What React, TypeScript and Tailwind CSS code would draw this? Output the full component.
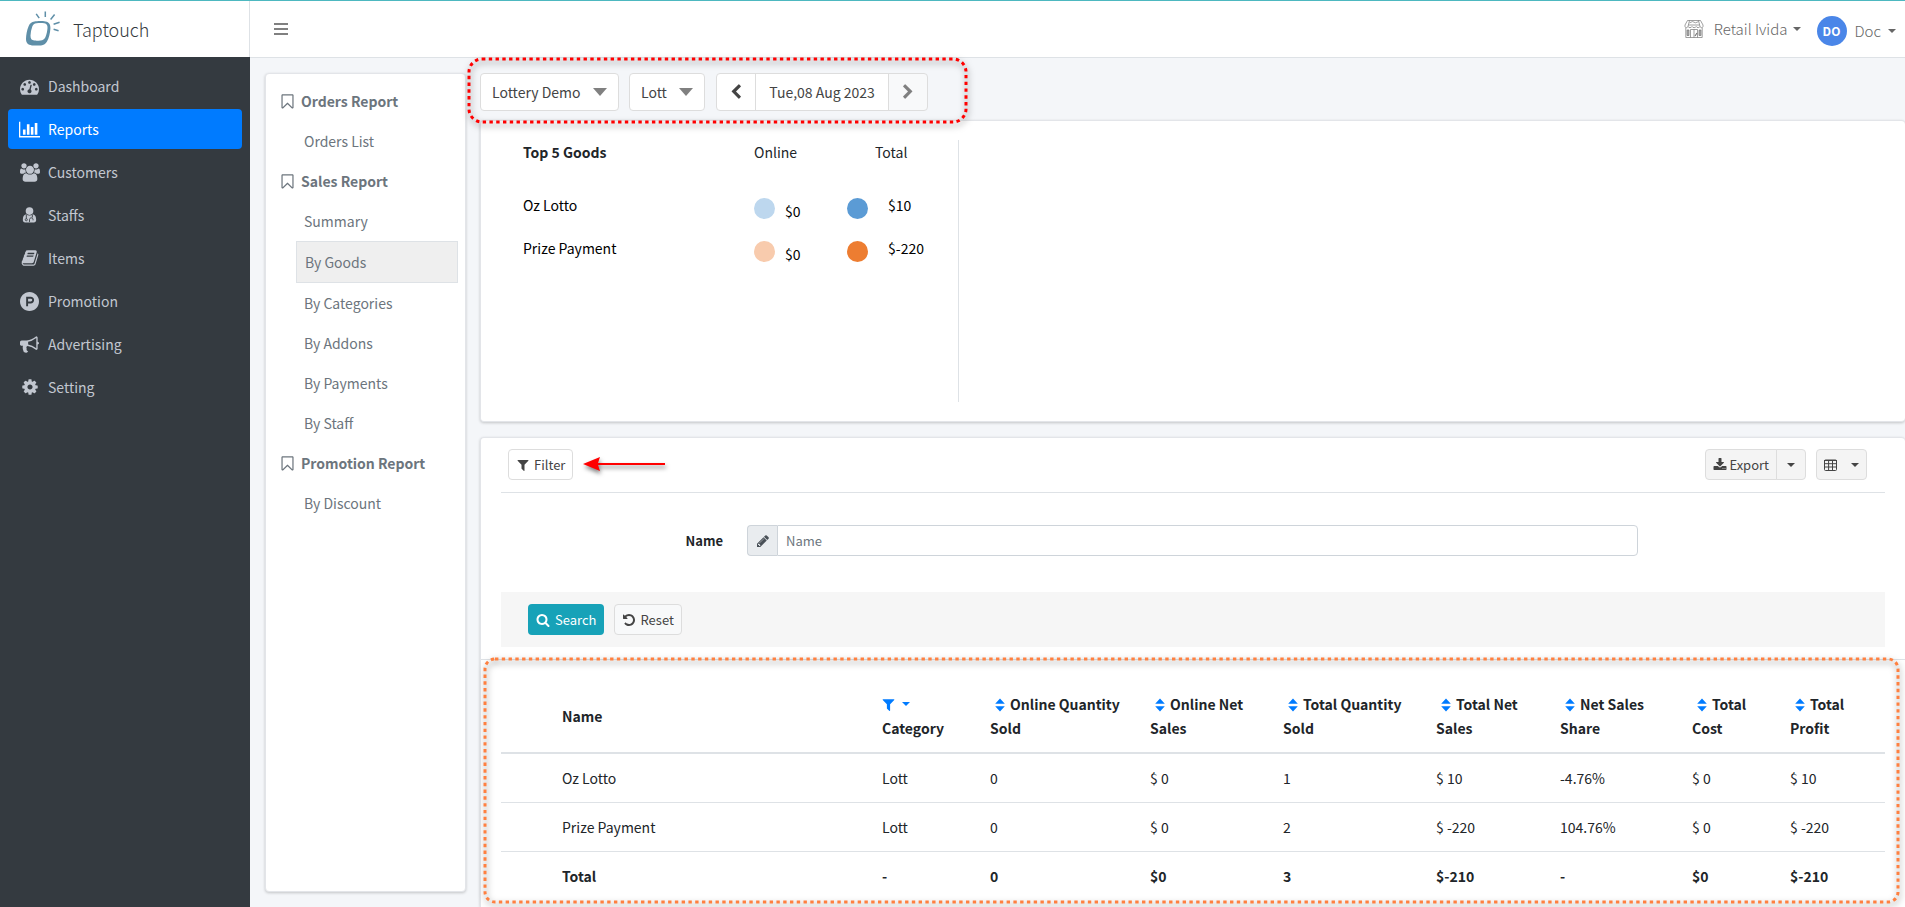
import type { ReactNode } from "react";

const ICONS = {
  dashboard: "M384 1152q0-53-37.5-90.5t-90.5-37.5-90.5 37.5-37.5 90.5 37.5 90.5 90.5 37.5 90.5-37.5 37.5-90.5zm192-448q0-53-37.5-90.5t-90.5-37.5-90.5 37.5-37.5 90.5 37.5 90.5 90.5 37.5 90.5-37.5 37.5-90.5zm428 481l101-382q6-26-7.5-48.5t-38.5-29.5-48 6.5-30 39.5l-101 382q-60 5-107 43.5t-63 98.5q-20 77 20 146t117 89 146-20 89-117q16-60-6-117t-72-91zm660-33q0-53-37.5-90.5t-90.5-37.5-90.5 37.5-37.5 90.5 37.5 90.5 90.5 37.5 90.5-37.5 37.5-90.5zm-640-640q0-53-37.5-90.5t-90.5-37.5-90.5 37.5-37.5 90.5 37.5 90.5 90.5 37.5 90.5-37.5 37.5-90.5zm448 192q0-53-37.5-90.5t-90.5-37.5-90.5 37.5-37.5 90.5 37.5 90.5 90.5 37.5 90.5-37.5 37.5-90.5zm320 448q0 261-141 483-19 29-54 29h-1402q-35 0-54-29-141-221-141-483 0-182 71-348t191-286 286-191 348-71 348 71 286 191 191 286 71 348z",
  chart: "M640 896v512h-256v-512h256zm384-512v1024h-256v-1024h256zm1024 1152v128h-2048v-1536h128v1408h1920zm-640-896v768h-256v-768h256zm384-384v1152h-256v-1152h256z",
  users: "M593 896q-162 5-265 128h-134q-82 0-138-40.5t-56-118.5q0-353 124-353 6 0 43.5 21t97.5 42.5 119 21.5q67 0 133-23-5 37-5 66 0 139 81 256zm1071 637q0 120-73 189.5t-194 69.5h-874q-121 0-194-69.5t-73-189.5q0-53 3.5-103.5t14-109 26.5-108.5 43-97.5 62-81 85.5-53.5 111.5-20q10 0 43 21.5t73 48 107 48 135 21.5 135-21.5 107-48 73-48 43-21.5q61 0 111.5 20t85.5 53.5 62 81 43 97.5 26.5 108.5 14 109 3.5 103.5zm-1024-1277q0 106-75 181t-181 75-181-75-75-181 75-181 181-75 181 75 75 181zm704 384q0 159-112.5 271.5t-271.5 112.5-271.5-112.5-112.5-271.5 112.5-271.5 271.5-112.5 271.5 112.5 112.5 271.5zm576 225q0 78-56 118.5t-138 40.5h-134q-103-123-265-128 81-117 81-256 0-29-5-66 66 23 133 23 59 0 119-21.5t97.5-42.5 43.5-21q124 0 124 353zm-128-609q0 106-75 181t-181 75-181-75-75-181 75-181 181-75 181 75 75 181z",
  book: "M1703 478q40 57 18 129l-275 906q-19 64-76.5 107.5t-122.5 43.5h-923q-77 0-148.5-53.5t-99.5-131.5q-24-67-2-127 0-4 3-27t4-37q1-8-3-21.5t-3-19.5q2-11 8-21t16.5-23.5 16.5-23.5q23-38 45-91.5t30-91.5q3-10 .5-30t-.5-28q3-11 17-28t17-23q21-36 42-92t25-90q1-9-2.5-32t.5-28q4-13 22-30.5t22-22.5q19-26 42.5-84.5t27.5-96.5q1-8-3-25.5t-2-26.5q2-8 9-18t18-23 17-21q8-12 16.5-30.5t15-35 16-36 19.5-32 26.5-23.5 36-11.5 47.5 5.5l-1 3q38-9 51-9h761q74 0 114 56t18 130l-274 906q-36 119-71.5 153.5t-128.5 34.5h-869q-27 0-38 15-11 16-1 43 24 70 144 70h923q29 0 56-15.5t35-41.5l300-987q7-22 5-57 38 15 59 43zm-1064 2q-4 13 2 22.5t20 9.5h608q13 0 25.5-9.5t16.5-22.5l21-64q4-13-2-22.5t-20-9.5h-608q-13 0-25.5 9.5t-16.5 22.5zm-83 256q-4 13 2 22.5t20 9.5h608q13 0 25.5-9.5t16.5-22.5l21-64q4-13-2-22.5t-20-9.5h-608q-13 0-25.5 9.5t-16.5 22.5z",
  promotion: "M1150 762q0 56-39.5 95t-95.5 39h-253v-269h253q56 0 95.5 39.5t39.5 94.5zm179 0q0-130-91.5-222t-222.5-92h-433v896h180v-269h253q130 0 222-91.5t92-221.5zm463 134q0 182-71 348t-191 286-286 191-348 71-348-71-286-191-191-286-71-348 71-348 191-286 286-191 348-71 348 71 286 191 191 286 71 348z",
  bullhorn: "M1664 640q53 0 90.5 37.5t37.5 90.5-37.5 90.5-90.5 37.5v384q0 52-38 90t-90 38q-417-347-812-380-58 19-91 66t-31 100.5 40 92.5q-20 33-23 65.5t6 58 33.5 55 48 50 61.5 50.5q-29 58-111.5 83t-168.5 11.5-132-55.5q-7-23-29.5-87.5t-32-94.5-23-89-15-101 3.5-98.5 22-110.5h-122q-66 0-113-47t-47-113v-192q0-66 47-113t113-47h480q435 0 896-384 52 0 90 38t38 90v384zm-128 604v-954q-394 302-768 343v270q377 42 768 341z",
  cog: "M1152 896q0-106-75-181t-181-75-181 75-75 181 75 181 181 75 181-75 75-181zm512-109v222q0 12-8 23t-20 13l-185 28q-19 54-39 91 35 50 107 138 10 12 10 25t-9 23q-27 37-99 108t-94 71q-12 0-26-9l-138-108q-44 23-91 38-16 136-29 186-7 28-36 28h-222q-14 0-24.5-8.5t-11.5-21.5l-28-184q-49-16-90-37l-141 107q-10 9-25 9-14 0-25-11-126-114-165-168-7-10-7-23 0-12 8-23 15-21 51-66.5t54-70.5q-27-50-41-99l-183-27q-13-2-21-12.5t-8-23.5v-222q0-12 8-23t19-13l186-28q14-46 39-92-40-57-107-138-10-12-10-24 0-10 9-23 26-36 98.5-107.5t94.5-71.5q13 0 26 10l138 107q44-23 91-38 16-136 29-186 7-28 36-28h222q14 0 24.5 8.5t11.5 21.5l28 184q49 16 90 37l142-107q9-9 24-9 13 0 25 10 129 119 165 170 7 8 7 22 0 12-8 23-15 21-51 66.5t-54 70.5q26 50 41 98l183 28q13 2 21 12.5t8 23.5z",
  bookmark: "M1408 256h-1024v1242l423-406 89-85 89 85 423 406v-1242zm12-128q23 0 44 9 33 13 52.5 41t19.5 62v1289q0 34-19.5 62t-52.5 41q-19 8-44 8-48 0-83-32l-441-424-441 424q-36 33-83 33-23 0-44-9-33-13-52.5-41t-19.5-62v-1289q0-34 19.5-62t52.5-41q21-9 44-9h1048z",
  filter: "M1595 295q17 41-14 70l-493 493v742q0 42-39 59-13 5-25 5-27 0-45-19l-256-256q-19-19-19-45v-486l-493-493q-31-29-14-70 17-39 59-39h1280q42 0 59 39z",
  search: "M1216 832q0-185-131.5-316.5t-316.5-131.5-316.5 131.5-131.5 316.5 131.5 316.5 316.5 131.5 316.5-131.5 131.5-316.5zm512 832q0 52-38 90t-90 38q-54 0-90-38l-343-342q-179 124-399 124-143 0-273.5-55.5t-225-150-150-225-55.5-273.5 55.5-273.5 150-225 225-150 273.5-55.5 273.5 55.5 225 150 150 225 55.5 273.5q0 220-124 399l343 343q37 37 37 90z",
  undo: "M1664 896q0 156-61 298t-164 245-245 164-298 61q-172 0-327-72.5t-264-204.5q-7-10-6.5-22.5t8.5-20.5l137-138q10-9 25-9 16 2 23 12 73 95 179 147t225 52q104 0 198.5-40.5t163.5-109.5 109.5-163.5 40.5-198.5-40.5-198.5-109.5-163.5-163.5-109.5-198.5-40.5q-98 0-188 35.5t-160 101.5l137 138q31 30 14 69-17 40-59 40h-448q-26 0-45-19t-19-45v-448q0-42 40-59 39-17 69 14l130 129q107-101 244.5-156.5t284.5-55.5q156 0 298 61t245 164 164 245 61 298z",
  left: "M1427 301l-531 531 531 531q19 19 19 45t-19 45l-166 166q-19 19-45 19t-45-19l-742-742q-19-19-19-45t19-45l742-742q19-19 45-19t45 19l166 166q19 19 19 45t-19 45z",
  right: "M1363 877l-742 742q-19 19-45 19t-45-19l-166-166q-19-19-19-45t19-45l531-531-531-531q-19-19-19-45t19-45l166-166q19-19 45-19t45 19l742 742q19 19 19 45t-19 45z",
  download: "M1344 1344q0-26-19-45t-45-19-45 19-19 45 19 45 45 19 45-19 19-45zm256 0q0-26-19-45t-45-19-45 19-19 45 19 45 45 19 45-19 19-45zm128-224v320q0 40-28 68t-68 28h-1472q-40 0-68-28t-28-68v-320q0-40 28-68t68-28h465l135 136q58 56 136 56t136-56l136-136h464q40 0 68 28t28 68zm-325-569q17 41-14 70l-448 448q-18 19-45 19t-45-19l-448-448q-31-29-14-70 17-39 59-39h256v-448q0-26 19-45t45-19h256q26 0 45 19t19 45v448h256q42 0 59 39z",
  pencil: "M491 1536l91-91-235-235-91 91v107h128v128h107zm523-928q0-22-22-22-10 0-17 7l-542 542q-7 7-7 17 0 22 22 22 10 0 17-7l542-542q7-7 7-17zm-54-192l416 416-832 832h-416v-416zm683 96q0 53-37 90l-166 166-416-416 166-165q36-38 90-38 53 0 91 38l235 234q37 39 37 91z",
};

function Icon({ name, className, box = 1792 }: { name: keyof typeof ICONS; className: string; box?: number }) {
  return (
    <svg viewBox={`0 0 ${box} 1792`} className={`shrink-0 fill-current ${className}`} aria-hidden="true">
      <path d={ICONS[name]} />
    </svg>
  );
}

function Caret({ className }: { className: string }) {
  return (
    <svg viewBox="0 0 10 5" preserveAspectRatio="none" className={`shrink-0 fill-current ${className}`} aria-hidden="true">
      <path d="M0 0h10L5 5z" />
    </svg>
  );
}

function SortIcon() {
  return (
    <svg viewBox="0 0 10 14" className="ml-[5px] mr-[5px] inline-block h-[14px] w-[10px] fill-[#007bff] align-[-2px]" aria-hidden="true">
      <path d="M5 .6 9.800 5.800H.2zM.2 8.200h9.600L5 13.400z" />
    </svg>
  );
}

function DoctorIcon() {
  return (
    <svg viewBox="0 0 16 18" className="h-[16px] w-[15px] shrink-0" aria-hidden="true">
      <circle cx="8" cy="4.6" r="4.3" fill="currentColor" />
      <path d="M4.2 8.2C1.6 8.8.5 11 .5 14.6c0 1.700 1 2.700 2.600 2.700h9.800c1.600 0 2.600-1 2.600-2.700 0-3.600-1.100-5.800-3.700-6.400-2.200 1.800-5.400 1.800-7.600 0z" fill="currentColor" />
      <path d="M4.400 8.600v4.700M8 16.800v-2.600c0-1.200 1-2 2-2s2 .8 2 2v.8M11.200 8.600v3.200" fill="none" stroke="#343a40" strokeWidth="1" />
      <circle cx="4.400" cy="14.300" r="1.200" fill="none" stroke="#343a40" strokeWidth=".9" />
    </svg>
  );
}

function Logo() {
  return (
    <svg viewBox="0 0 36 36" className="h-[36px] w-[36px]" fill="none" aria-hidden="true">
      <path
        fillRule="evenodd"
        fill="#5f8fa8"
        d="M9.500 10.500C12 9.900 17 9.800 20.500 10.400c3.600.6 5.200 3.200 4.900 7.100-.3 4.500-1.400 9.500-3.400 13-1.300 2.400-3.200 3.700-6 3.900-3.300.2-6.300.2-9 0C3 34 .9 31.800 1 27.800c.1-4.200.9-8.600 2.600-12.600 1.200-2.800 2.900-4.200 5.900-4.700zM11.500 12.300c-2.200.3-3.400 1.300-4.200 3.300-1.100 3-1.700 6-1.800 9-.1 3.200 1.100 4.800 3.800 5 2 .2 4 .1 6.200-.1 2.400-.2 4-1.300 4.900-3.300 1.200-2.800 1.900-6.200 2.100-9.200.1-2.900-.9-4.200-3.200-4.700-2.500-.4-5.300-.4-7.800 0z"
      />
      <path d="M11.200 2.800l3 4.400M20.300.5v5.500M29.600 3.600l-4 4.800M34.600 11.200l-6 2M28.600 18.200l5 1.500" stroke="#5f8fa8" strokeWidth="1.500" />
    </svg>
  );
}

function StoreIcon() {
  return (
    <svg viewBox="0 0 20 18" className="h-[18px] w-[20px]" fill="none" stroke="#777" strokeWidth=".7" aria-hidden="true">
      <path d="M3.500.5h13l2.500 4.500v1.500c0 1.500-2.600 1.500-3 0-.4 1.500-3.200 1.500-3.800 0-.5 1.500-3.600 1.500-4.200 0C7.400 8 4.500 8 4 6.500 3.500 8 1 8 1 6.500V5zM5.500.5L4 6.500M14.500.5l1.500 6M1.800 8v9.500h16.400V8" />
      <path d="M5.500 2.800l3-1.200 3 1.200 3-1.200M4.500 5h11" />
      <path d="M6.500 17.500V9.500h7v8M10 9.500v8M3 10h2v5.500H3zM15 10h2v5.500h-2z" />
      <path d="M4 10v5.500M16 10v5.500M13 13l-2 3" strokeWidth="1.200" />
    </svg>
  );
}

// dotted callout with a soft shadow
function Callout({ className, color, radius }: { className: string; color: string; radius: number }) {
  return (
    <svg className={`pointer-events-none absolute overflow-visible drop-shadow-[1px_3px_3px_rgba(0,0,0,0.5)] ${className}`} aria-hidden="true">
      <rect width="100%" height="100%" rx={radius} fill="none" stroke={color} strokeWidth="3" strokeDasharray="3.400 3.370" />
    </svg>
  );
}

const menu: { label: string; icon: ReactNode }[] = [
  { label: "Dashboard", icon: <Icon name="dashboard" className="size-[19px]" /> },
  { label: "Reports", icon: <Icon name="chart" box={2048} className="h-[19px] w-[21px]" /> },
  { label: "Customers", icon: <Icon name="users" box={1920} className="h-[19px] w-[20px]" /> },
  { label: "Staffs", icon: <DoctorIcon /> },
  { label: "Items", icon: <Icon name="book" className="size-[18px]" /> },
  { label: "Promotion", icon: <Icon name="promotion" className="size-[19px]" /> },
  { label: "Advertising", icon: <Icon name="bullhorn" className="size-[19px]" /> },
  { label: "Setting", icon: <Icon name="cog" className="size-[18px]" /> },
];

const reports = [
  { title: "Orders Report", items: ["Orders List"] },
  { title: "Sales Report", items: ["Summary", "By Goods", "By Categories", "By Addons", "By Payments", "By Staff"] },
  { title: "Promotion Report", items: ["By Discount"] },
];

const goods = [
  { name: "Oz Lotto", online: "$0", total: "$10", light: "bg-[#bdd7ee]", dark: "bg-[#5b9bd5]" },
  { name: "Prize Payment", online: "$0", total: "$-220", light: "bg-[#f8cbad]", dark: "bg-[#ed7d31]" },
];

const sortable = [
  ["Online Quantity", "Sold"],
  ["Online Net", "Sales"],
  ["Total Quantity", "Sold"],
  ["Total Net", "Sales"],
  ["Net Sales", "Share"],
  ["Total", "Cost"],
  ["Total", "Profit"],
];

const rows = [
  ["Oz Lotto", "Lott", "0", "$ 0", "1", "$ 10", "-4.76%", "$ 0", "$ 10"],
  ["Prize Payment", "Lott", "0", "$ 0", "2", "$ -220", "104.76%", "$ 0", "$ -220"],
];

const totals = ["Total", "-", "0", "$0", "3", "$-210", "-", "$0", "$-210"];

const card = "border-[#e3e5e9] bg-white shadow-[0_1px_3px_rgba(0,0,0,0.2)]";

function Sidebar() {
  return (
    <aside className="w-[250px] shrink-0 bg-[#343a40]">
      <a href="#" className="flex h-[57px] items-center border-r border-[#dee2e6] bg-white pl-[25px]">
        <Logo />
        <span className="ml-3 text-[18px] font-light text-[#343a40]">Taptouch</span>
      </a>
      <nav className="flex flex-col gap-[3px] px-2 pt-[9px]">
        {menu.map((m) => (
          <a
            key={m.label}
            href="#"
            className={`flex h-10 items-center rounded px-[11px] ${m.label === "Reports" ? "bg-[#007bff] text-white" : "text-[#c2c7d0]"}`}
          >
            <span className="flex w-[21px] justify-center">{m.icon}</span>
            <span className="ml-2">{m.label}</span>
          </a>
        ))}
      </nav>
    </aside>
  );
}

function Header() {
  return (
    <header className="flex h-[58px] items-center border-b border-[#dee2e6] bg-white pr-[9px] pl-6">
      <button type="button" aria-label="Toggle menu" className="flex flex-col gap-[3px] pt-px">
        <span className="h-[2px] w-[14px] bg-[#808080]" />
        <span className="h-[2px] w-[14px] bg-[#808080]" />
        <span className="h-[2px] w-[14px] bg-[#808080]" />
      </button>
      <div className="ml-auto flex items-center text-[15px] font-light text-[#666]">
        <StoreIcon />
        <button type="button" className="ml-[10px] flex items-center">
          Retail Ivida
          <Caret className="ml-[5px] h-1 w-2" />
        </button>
        <button type="button" className="ml-4 flex items-center pt-[5px]">
          <span className="flex size-[30px] items-center justify-center rounded-full bg-[#4a86e8] text-[12px] font-bold text-white">DO</span>
          <span className="ml-2">Doc</span>
          <Caret className="ml-[7px] h-1 w-2" />
        </button>
      </div>
    </header>
  );
}

function ReportNav() {
  return (
    <nav className={`mb-[15px] w-[201px] shrink-0 rounded border py-[7px] ${card}`}>
      {reports.map((group) => (
        <div key={group.title}>
          <h3 className="flex h-10 items-center pl-[13px] font-bold text-[#6c757d]">
            <Icon name="bookmark" className="size-[17px]" />
            <span className="ml-[5px]">{group.title}</span>
          </h3>
          {group.items.map((item) => (
            <a
              key={item}
              href="#"
              className={`mr-[7px] ml-[30px] flex items-center pl-2 text-[#6c757d] ${
                item === "By Goods" ? "h-[42px] border border-[#dee2e6] bg-[#efefef]" : "h-10"
              }`}
            >
              {item}
            </a>
          ))}
        </div>
      ))}
    </nav>
  );
}

function Toolbar() {
  const btn = "flex h-full items-center border border-[#ddd] text-[#444]";
  return (
    <div className="relative flex h-[38px] w-fit">
      <button type="button" className={`w-[139px] justify-between rounded bg-white px-[11px] ${btn}`}>
        Lottery Demo <Caret className="h-2 w-[14px] text-[#808080]" />
      </button>
      <button type="button" className={`ml-[10px] w-[76px] justify-between rounded bg-white px-[11px] ${btn}`}>
        Lott <Caret className="h-2 w-[14px] text-[#808080]" />
      </button>
      <div className="ml-[11px] flex">
        <button type="button" aria-label="Previous day" className={`w-10 justify-center rounded-l bg-white ${btn}`}>
          <Icon name="left" className="size-4" />
        </button>
        <button type="button" className={`-ml-px w-[134px] justify-center bg-white ${btn}`}>
          Tue,08 Aug 2023
        </button>
        <button type="button" aria-label="Next day" disabled className={`-ml-px w-10 justify-center rounded-r bg-[#f8f9fa] ${btn}`}>
          <Icon name="right" className="size-4 text-[#808080]" />
        </button>
      </div>
      <Callout className="-top-[14px] -left-[11px] h-[63px] w-[497px]" color="#ff0000" radius={13} />
    </div>
  );
}

function TopGoods() {
  return (
    <section className={`mt-[9px] flex h-[302px] rounded border border-r-0 py-[19px] ${card}`}>
      <div className="w-[478px] border-r border-[#dee2e6] pl-[42px] text-black">
        <div className="grid h-5 grid-cols-[231px_121px_auto] items-center text-[#212529]">
          <h2 className="font-bold">Top 5 Goods</h2>
          <span>Online</span>
          <span>Total</span>
        </div>
        <div className="mt-[27px]">
          {goods.map((g) => (
            <div key={g.name} className="grid h-[43px] grid-cols-[231px_93px_auto] items-center">
              <span className="pb-2">{g.name}</span>
              <span className="flex items-center">
                <span className={`size-[21px] rounded-full ${g.light}`} />
                <span className="ml-[10px] pt-1">{g.online}</span>
              </span>
              <span className="flex items-center">
                <span className={`size-[21px] rounded-full ${g.dark}`} />
                <span className="ml-5 pb-2">{g.total}</span>
              </span>
            </div>
          ))}
        </div>
      </div>
    </section>
  );
}

function GoodsTable() {
  return (
    <div className="relative px-5 pt-5 pb-1">
      <table className="w-full table-fixed text-left">
        <colgroup>
          <col className="w-[49px]" />
          <col />
          <col className="w-[108px]" />
          <col className="w-[160px]" />
          <col className="w-[133px]" />
          <col className="w-[153px]" />
          <col className="w-[124px]" />
          <col className="w-[132px]" />
          <col className="w-[98px]" />
          <col className="w-[107px]" />
        </colgroup>
        <thead>
          <tr className="border-b-2 border-[#dee2e6]">
            <th />
            <th className="p-3 font-bold">Name</th>
            <th className="p-3 font-bold">
              <span className="flex h-6 items-center text-[#007bff]">
                <Icon name="filter" className="-ml-px size-[15px]" />
                <Caret className="ml-[6px] h-1 w-2" />
              </span>
              Category
            </th>
            {sortable.map(([a, b]) => (
              <th key={a + b} className="p-3 font-bold whitespace-nowrap">
                <SortIcon />
                {a}
                <br />
                {b}
              </th>
            ))}
          </tr>
        </thead>
        <tbody>
          {rows.map((r) => (
            <tr key={r[0]} className="border-b border-[#dee2e6]">
              <td />
              {r.map((c, i) => (
                <td key={i} className="p-3">{c}</td>
              ))}
            </tr>
          ))}
        </tbody>
        <tfoot>
          <tr className="font-bold">
            <td />
            {totals.map((c, i) => (
              <td key={i} className="p-3">{c}</td>
            ))}
          </tr>
        </tfoot>
      </table>
      <Callout className="-top-px left-1 h-[243px] w-[calc(100%-11px)]" color="#ff8040" radius={10} />
    </div>
  );
}

function GoodsPanel() {
  const small = "flex h-[31px] items-center border border-[#ddd] px-[7px] text-[#444]";
  return (
    <section className={`mt-[15px] flex-1 rounded-t border-t border-l ${card}`}>
      <div className="mx-5 flex h-[55px] items-start border-b border-[#dee2e6] px-[7px] pt-[11px] text-[13px]">
        <button type="button" className={`rounded bg-white ${small}`}>
          <Icon name="filter" className="mr-1 size-[14px]" />
          Filter
        </button>
        <svg viewBox="0 0 84 16" className="mt-[7px] ml-[10px] h-4 w-[84px] overflow-visible drop-shadow-[1px_3px_2px_rgba(0,0,0,0.5)]" aria-hidden="true">
          <path d="M0 8 17 1l-2 6h67v2H15l2 6z" fill="#f00" />
        </svg>
        <div className="ml-auto flex pr-[11px]">
          <button type="button" className={`rounded-l bg-[#f4f4f4] ${small}`}>
            <Icon name="download" className="mr-[2px] size-[14px]" />
            Export
          </button>
          <button type="button" aria-label="Export options" className={`-ml-px w-[30px] justify-center rounded-r bg-[#f4f4f4] ${small}`}>
            <Caret className="h-1 w-2" />
          </button>
          <button type="button" aria-label="Columns" className={`ml-[10px] w-[51px] justify-between rounded bg-[#f4f4f4] ${small}`}>
            <svg viewBox="0 0 13 12" className="h-3 w-[13px]" fill="none" stroke="currentColor" aria-hidden="true">
              <rect x=".5" y="1" width="12" height="10.500" rx="1" />
              <path d="M0 1.500h13M0 4.700h13M0 8h13M4.600 1v10.500M8.500 1v10.500" />
            </svg>
            <Caret className="h-1 w-2" />
          </button>
        </div>
      </div>
      <form onSubmit={(e) => e.preventDefault()} className="text-[13px]">
        <div className="flex items-center py-8">
          <label htmlFor="name" className="w-[17%] text-right font-bold">Name</label>
          <div className="ml-6 flex h-[31px] w-[891px]">
            <span className="flex w-[30px] items-center justify-center rounded-l border border-r-0 border-[#ced4da] bg-[#e9ecef] text-[#495057]">
              <Icon name="pencil" className="size-[14px]" />
            </span>
            <input id="name" placeholder="Name" className="min-w-0 flex-1 rounded-r border border-[#ced4da] px-2 placeholder:text-[#6c757d]" />
          </div>
        </div>
        <div className="mx-5 mt-1 flex h-[55px] items-center gap-[10px] bg-[#f6f6f6] px-[27px]">
          <button type="submit" className="flex h-[31px] items-center rounded bg-[#17a2b8] px-2 text-white">
            <Icon name="search" className="mr-[5px] size-[14px]" />
            Search
          </button>
          <button type="reset" className={`rounded bg-[#f8f9fa] ${small}`}>
            <Icon name="undo" className="mr-1 size-[14px]" />
            Reset
          </button>
        </div>
      </form>
      <div className="mt-3 border-t border-[#dee2e6]">
        <GoodsTable />
      </div>
    </section>
  );
}

export default function App() {
  return (
    <div className="relative flex min-h-screen bg-[#f4f6f9] font-['Noto_Sans_CJK_SC','Noto_Sans',sans-serif] text-[14px] leading-6 text-[#212529]">
      <div className="absolute inset-x-0 top-0 h-px bg-[#4db8c0]" />
      <Sidebar />
      <div className="flex min-w-0 flex-1 flex-col">
        <Header />
        <div className="flex flex-1 pt-[15px] pl-[15px]">
          <ReportNav />
          <main className="ml-[14px] flex min-w-0 flex-1 flex-col">
            <Toolbar />
            <TopGoods />
            <GoodsPanel />
          </main>
        </div>
      </div>
    </div>
  );
}
